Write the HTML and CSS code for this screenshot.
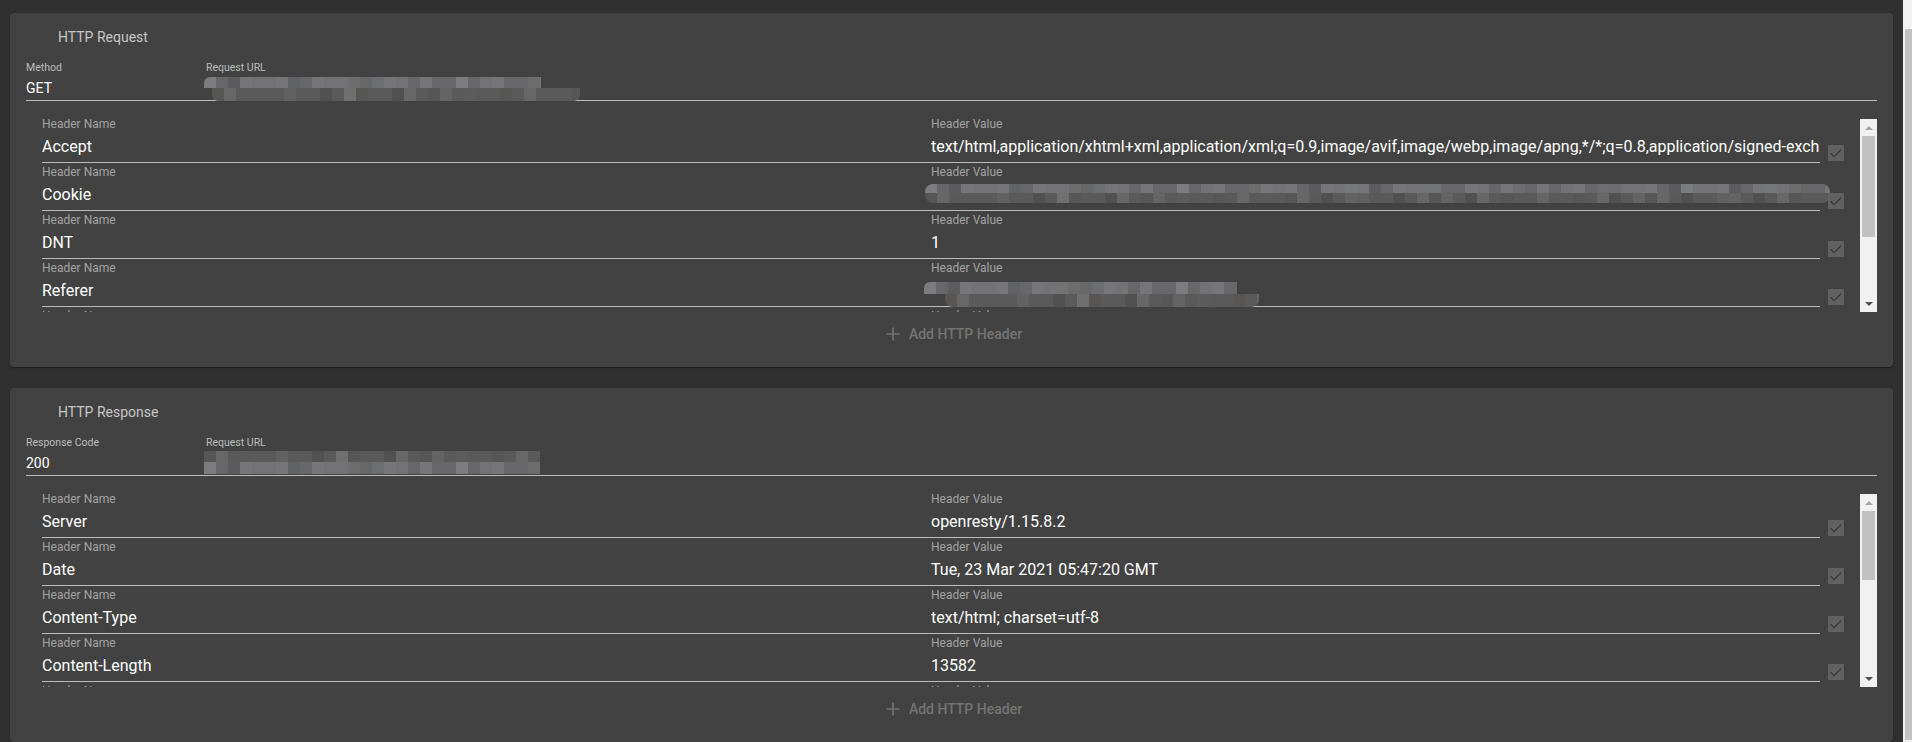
FILE: index.html
```html
<!DOCTYPE html>
<html lang="en">
<head>
<meta charset="utf-8">
<title>HTTP Request / Response</title>
<link rel="stylesheet" href="styles.css">
</head>
<body>
<div class="app">
  <main class="content">

    <section class="card">
      <div class="card-title">HTTP Request</div>
      <div class="top-fields">
        <div class="top-field method">
          <div class="top-label">Method</div>
          <div class="top-value">GET</div>
        </div>
        <div class="top-field url">
          <div class="top-label">Request URL</div>
          <div class="top-value visible">
            <div class="mosaic">
              <div class="m-row m-light url1-a"></div>
              <div class="m-row m-dark url1-b"></div>
            </div>
          </div>
        </div>
      </div>

      <div class="list">
        <div class="rows">
          <div class="row">
            <div class="field"><div class="field-label">Header Name</div><div class="field-value">Accept</div></div>
            <div class="field"><div class="field-label">Header Value</div><div class="field-value">text/html,application/xhtml+xml,application/xml;q=0.9,image/avif,image/webp,image/apng,*/*;q=0.8,application/signed-exchange;v=b3;q=0.9</div></div>
            <div class="check-cell"><span class="check"><svg viewBox="0 0 16 16" width="16" height="16"><path d="M2.6 8.2 L6.2 11.6 L13.2 4.6" fill="none" stroke="#383838" stroke-width="1.3"/></svg></span></div>
          </div>
          <div class="row">
            <div class="field"><div class="field-label">Header Name</div><div class="field-value">Cookie</div></div>
            <div class="field visible"><div class="field-label">Header Value</div><div class="field-value visible">
              <div class="mosaic cookie">
                <div class="m-row m-light cookie-a"></div>
                <div class="m-row m-dark cookie-b"></div>
              </div>
            </div></div>
            <div class="check-cell"><span class="check"><svg viewBox="0 0 16 16" width="16" height="16"><path d="M2.6 8.2 L6.2 11.6 L13.2 4.6" fill="none" stroke="#383838" stroke-width="1.3"/></svg></span></div>
          </div>
          <div class="row">
            <div class="field"><div class="field-label">Header Name</div><div class="field-value">DNT</div></div>
            <div class="field"><div class="field-label">Header Value</div><div class="field-value">1</div></div>
            <div class="check-cell"><span class="check"><svg viewBox="0 0 16 16" width="16" height="16"><path d="M2.6 8.2 L6.2 11.6 L13.2 4.6" fill="none" stroke="#383838" stroke-width="1.3"/></svg></span></div>
          </div>
          <div class="row">
            <div class="field"><div class="field-label">Header Name</div><div class="field-value">Referer</div></div>
            <div class="field"><div class="field-label">Header Value</div><div class="field-value visible">
              <div class="mosaic ref">
                <div class="m-row m-light ref-a"></div>
                <div class="m-row m-dark ref-b"></div>
              </div>
            </div></div>
            <div class="check-cell"><span class="check"><svg viewBox="0 0 16 16" width="16" height="16"><path d="M2.6 8.2 L6.2 11.6 L13.2 4.6" fill="none" stroke="#383838" stroke-width="1.3"/></svg></span></div>
          </div>
          <div class="row">
            <div class="field"><div class="field-label">Header Name</div><div class="field-value">Upgrade-Insecure-Requests</div></div>
            <div class="field"><div class="field-label">Header Value</div><div class="field-value">1</div></div>
            <div class="check-cell"><span class="check"><svg viewBox="0 0 16 16" width="16" height="16"><path d="M2.6 8.2 L6.2 11.6 L13.2 4.6" fill="none" stroke="#383838" stroke-width="1.3"/></svg></span></div>
          </div>
          <div class="row">
            <div class="field"><div class="field-label">Header Name</div><div class="field-value">User-Agent</div></div>
            <div class="field"><div class="field-label">Header Value</div><div class="field-value">Mozilla/5.0 (Windows NT 10.0; Win64; x64) AppleWebKit/537.36 (KHTML, like Gecko) Chrome/89.0.4389.90 Safari/537.36</div></div>
            <div class="check-cell"><span class="check"><svg viewBox="0 0 16 16" width="16" height="16"><path d="M2.6 8.2 L6.2 11.6 L13.2 4.6" fill="none" stroke="#383838" stroke-width="1.3"/></svg></span></div>
          </div>
        </div>
        <div class="vscroll">
          <div class="sb-btn"><span class="arrow-up"></span></div>
          <div class="sb-track"><div class="sb-thumb" style="height:101px"></div></div>
          <div class="sb-btn"><span class="arrow-down"></span></div>
        </div>
      </div>

      <div class="actions">
        <button class="add-btn" type="button"><svg class="plus" viewBox="0 0 14 14" width="14" height="14"><path d="M7 0.5 V13.5 M0.5 7 H13.5" stroke="#737373" stroke-width="1.6" fill="none"/></svg><span>Add HTTP Header</span></button>
      </div>
    </section>

    <section class="card">
      <div class="card-title">HTTP Response</div>
      <div class="top-fields">
        <div class="top-field method">
          <div class="top-label">Response Code</div>
          <div class="top-value">200</div>
        </div>
        <div class="top-field url">
          <div class="top-label">Request URL</div>
          <div class="top-value visible">
            <div class="mosaic url2">
              <div class="m-row m-dark url2-a"></div>
              <div class="m-row m-light url2-b"></div>
            </div>
          </div>
        </div>
      </div>

      <div class="list">
        <div class="rows">
          <div class="row">
            <div class="field"><div class="field-label">Header Name</div><div class="field-value">Server</div></div>
            <div class="field"><div class="field-label">Header Value</div><div class="field-value">openresty/1.15.8.2</div></div>
            <div class="check-cell"><span class="check"><svg viewBox="0 0 16 16" width="16" height="16"><path d="M2.6 8.2 L6.2 11.6 L13.2 4.6" fill="none" stroke="#383838" stroke-width="1.3"/></svg></span></div>
          </div>
          <div class="row">
            <div class="field"><div class="field-label">Header Name</div><div class="field-value">Date</div></div>
            <div class="field"><div class="field-label">Header Value</div><div class="field-value">Tue, 23 Mar 2021 05:47:20 GMT</div></div>
            <div class="check-cell"><span class="check"><svg viewBox="0 0 16 16" width="16" height="16"><path d="M2.6 8.2 L6.2 11.6 L13.2 4.6" fill="none" stroke="#383838" stroke-width="1.3"/></svg></span></div>
          </div>
          <div class="row">
            <div class="field"><div class="field-label">Header Name</div><div class="field-value">Content-Type</div></div>
            <div class="field"><div class="field-label">Header Value</div><div class="field-value">text/html; charset=utf-8</div></div>
            <div class="check-cell"><span class="check"><svg viewBox="0 0 16 16" width="16" height="16"><path d="M2.6 8.2 L6.2 11.6 L13.2 4.6" fill="none" stroke="#383838" stroke-width="1.3"/></svg></span></div>
          </div>
          <div class="row">
            <div class="field"><div class="field-label">Header Name</div><div class="field-value">Content-Length</div></div>
            <div class="field"><div class="field-label">Header Value</div><div class="field-value">13582</div></div>
            <div class="check-cell"><span class="check"><svg viewBox="0 0 16 16" width="16" height="16"><path d="M2.6 8.2 L6.2 11.6 L13.2 4.6" fill="none" stroke="#383838" stroke-width="1.3"/></svg></span></div>
          </div>
          <div class="row">
            <div class="field"><div class="field-label">Header Name</div><div class="field-value">Connection</div></div>
            <div class="field"><div class="field-label">Header Value</div><div class="field-value">keep-alive</div></div>
            <div class="check-cell"><span class="check"><svg viewBox="0 0 16 16" width="16" height="16"><path d="M2.6 8.2 L6.2 11.6 L13.2 4.6" fill="none" stroke="#383838" stroke-width="1.3"/></svg></span></div>
          </div>
          <div class="row">
            <div class="field"><div class="field-label">Header Name</div><div class="field-value">Vary</div></div>
            <div class="field"><div class="field-label">Header Value</div><div class="field-value">Accept-Encoding</div></div>
            <div class="check-cell"><span class="check"><svg viewBox="0 0 16 16" width="16" height="16"><path d="M2.6 8.2 L6.2 11.6 L13.2 4.6" fill="none" stroke="#383838" stroke-width="1.3"/></svg></span></div>
          </div>
          <div class="row">
            <div class="field"><div class="field-label">Header Name</div><div class="field-value">X-Frame-Options</div></div>
            <div class="field"><div class="field-label">Header Value</div><div class="field-value">SAMEORIGIN</div></div>
            <div class="check-cell"><span class="check"><svg viewBox="0 0 16 16" width="16" height="16"><path d="M2.6 8.2 L6.2 11.6 L13.2 4.6" fill="none" stroke="#383838" stroke-width="1.3"/></svg></span></div>
          </div>
          <div class="row">
            <div class="field"><div class="field-label">Header Name</div><div class="field-value">Cache-Control</div></div>
            <div class="field"><div class="field-label">Header Value</div><div class="field-value">no-cache</div></div>
            <div class="check-cell"><span class="check"><svg viewBox="0 0 16 16" width="16" height="16"><path d="M2.6 8.2 L6.2 11.6 L13.2 4.6" fill="none" stroke="#383838" stroke-width="1.3"/></svg></span></div>
          </div>
          <div class="row">
            <div class="field"><div class="field-label">Header Name</div><div class="field-value">Content-Encoding</div></div>
            <div class="field"><div class="field-label">Header Value</div><div class="field-value">gzip</div></div>
            <div class="check-cell"><span class="check"><svg viewBox="0 0 16 16" width="16" height="16"><path d="M2.6 8.2 L6.2 11.6 L13.2 4.6" fill="none" stroke="#383838" stroke-width="1.3"/></svg></span></div>
          </div>
        </div>
        <div class="vscroll">
          <div class="sb-btn"><span class="arrow-up"></span></div>
          <div class="sb-track"><div class="sb-thumb" style="height:69px"></div></div>
          <div class="sb-btn"><span class="arrow-down"></span></div>
        </div>
      </div>

      <div class="actions">
        <button class="add-btn" type="button"><svg class="plus" viewBox="0 0 14 14" width="14" height="14"><path d="M7 0.5 V13.5 M0.5 7 H13.5" stroke="#737373" stroke-width="1.6" fill="none"/></svg><span>Add HTTP Header</span></button>
      </div>
    </section>

  </main>
  <div class="page-scroll"><div class="page-thumb"></div></div>
</div>
</body>
</html>
```

FILE: styles.css
```css
* { box-sizing: border-box; }

html, body {
  margin: 0;
  padding: 0;
  background: #303030;
  font-family: Roboto, "Liberation Sans", Arial, sans-serif;
}

.app {
  display: flex;
  height: 742px;
  overflow: hidden;
}

.content {
  flex: 1;
  min-width: 0;
  padding: 13px 10px 0;
  display: flex;
  flex-direction: column;
  gap: 21px;
  overflow: hidden;
}

.page-scroll {
  width: 9px;
  flex-shrink: 0;
  background: #f1f1f1;
  padding: 29px 0 2px 2px;
}

.page-thumb {
  height: 100%;
  background: #c1c1c1;
}

/* card */
.card {
  flex-shrink: 0;
  height: 354px;
  background: #424242;
  border-radius: 4px;
  padding: 14px 16px 15px;
  box-shadow: 0 2px 1px -1px rgba(0,0,0,.2), 0 1px 1px 0 rgba(0,0,0,.14), 0 1px 3px 0 rgba(0,0,0,.12);
  display: flex;
  flex-direction: column;
}

.card-title {
  padding-left: 32px;
  font-size: 14px;
  line-height: 20px;
  color: #c6c6c6;
}

/* top fields */
.top-fields {
  display: flex;
  margin-top: 15px;
}

.top-field {
  display: flex;
  flex-direction: column;
  border-bottom: 1px solid #bdbdbd;
}

.top-field.method { width: 180px; }
.top-field.url { flex: 1; min-width: 0; }

.top-label {
  font-size: 10.5px;
  line-height: 12px;
  color: #bdbdbd;
}

.top-value {
  font-size: 14px;
  line-height: 28px;
  height: 26px;
  color: #ffffff;
  white-space: nowrap;
  overflow: hidden;
}

.top-value.visible { overflow: visible; }

/* mosaic (pixelated redaction) */
.mosaic {
  display: flex;
  flex-direction: column;
  margin-top: 3px;
  margin-left: -2px;
}

.m-row {
  background-color: #626262;
}

.m-light {
  background-image:
    repeating-linear-gradient(90deg, rgba(255,255,255,.10) 0 12px, transparent 12px 36px),
    repeating-linear-gradient(90deg, transparent 0 24px, rgba(0,0,0,.10) 24px 36px, transparent 36px 60px),
    repeating-linear-gradient(90deg, rgba(140,160,170,.12) 0 12px, transparent 12px 84px),
    repeating-linear-gradient(90deg, transparent 0 48px, rgba(255,255,255,.08) 48px 72px);
  background-color: #676769;
}

.m-dark {
  background-image:
    repeating-linear-gradient(90deg, rgba(0,0,0,.10) 0 12px, transparent 12px 36px),
    repeating-linear-gradient(90deg, transparent 0 12px, rgba(255,255,255,.08) 12px 24px, transparent 24px 60px),
    repeating-linear-gradient(90deg, rgba(150,140,120,.12) 0 12px, transparent 12px 72px),
    repeating-linear-gradient(90deg, transparent 0 36px, rgba(255,255,255,.06) 36px 48px, transparent 48px 96px);
  background-color: #5a5a5a;
}

.url1-a { width: 337px; height: 11px; border-radius: 6px 0 0 0; }
.url1-b { width: 368px; height: 13px; margin-left: 8px; border-radius: 0 0 6px 6px; }

.mosaic.url2 { margin-top: 2px; }
.url2-a { width: 336px; height: 11px; }
.url2-b { width: 336px; height: 12px; }

.mosaic.cookie { margin-top: 6px; margin-left: -6px; }
.cookie-a { width: 905px; height: 9px; border-radius: 8px 8px 0 0; }
.cookie-b { width: 905px; height: 10px; border-radius: 0 0 8px 8px; }

.mosaic.ref { margin-top: 8px; margin-left: -7px; }
.ref-a { width: 313px; height: 12px; border-radius: 6px 0 0 0; }
.ref-b { width: 314px; height: 13px; margin-left: 21px; border-radius: 0 0 8px 8px; }

/* header list */
.list {
  display: flex;
  height: 193px;
  margin-top: 18px;
  margin-left: 16px;
}

.rows {
  flex: 1;
  min-width: 0;
  overflow: hidden;
}

.row {
  display: flex;
  height: 48px;
  padding-bottom: 4px;
}

.field {
  flex: 1;
  min-width: 0;
  display: flex;
  flex-direction: column;
  border-bottom: 1px solid #bdbdbd;
}

.field-label {
  font-size: 12px;
  line-height: 11px;
  height: 11px;
  color: #a2a2a2;
  white-space: nowrap;
}

.field-value {
  font-size: 16px;
  line-height: 34px;
  height: 32px;
  color: #ffffff;
  white-space: nowrap;
  overflow: hidden;
}

.field-value.visible { overflow: visible; }

.check-cell {
  width: 40px;
  flex-shrink: 0;
  padding: 26px 0 0 8px;
}

.check {
  display: block;
  width: 16px;
  height: 16px;
  background: #616161;
  border-radius: 1px;
}

.check svg { display: block; }

/* fake inner scrollbar */
.vscroll {
  width: 17px;
  flex-shrink: 0;
  background: #f1f1f1;
  display: flex;
  flex-direction: column;
}

.sb-btn {
  height: 17px;
  display: flex;
  align-items: center;
  justify-content: center;
}

.arrow-up {
  width: 0;
  height: 0;
  border-left: 4px solid transparent;
  border-right: 4px solid transparent;
  border-bottom: 4px solid #a3a3a3;
}

.arrow-down {
  width: 0;
  height: 0;
  border-left: 4px solid transparent;
  border-right: 4px solid transparent;
  border-top: 4px solid #505050;
}

.sb-track {
  flex: 1;
  padding: 0 2px;
}

.sb-thumb {
  background: #c1c1c1;
}

/* add button */
.actions {
  display: flex;
  justify-content: center;
  margin-top: 4px;
}

.add-btn {
  height: 36px;
  display: flex;
  align-items: center;
  gap: 9px;
  padding: 0 16px;
  margin-left: 5px;
  background: transparent;
  border: none;
  font-family: Roboto, "Liberation Sans", Arial, sans-serif;
  font-size: 14px;
  font-weight: 500;
  color: #747474;
  cursor: pointer;
}

.plus { display: block; }
```
